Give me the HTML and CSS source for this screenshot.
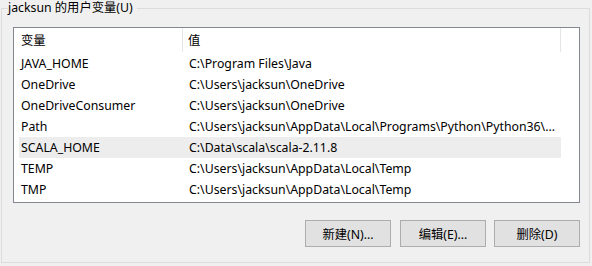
FILE: index.html
```html
<!DOCTYPE html>
<html lang="zh-CN">
<head>
<meta charset="utf-8">
<link rel="stylesheet" href="styles.css">
</head>
<body>
<fieldset class="group">
  <legend class="group-title">jacksun 的用户变量(U)</legend>
  <div class="list">
    <div class="list-head">
      <div class="hcell c1">变量</div>
      <div class="hcell c2">值</div>
    </div>
    <div class="rows">
      <div class="row"><span class="c1">JAVA_HOME</span><span class="c2">C:\Program Files\Java</span></div>
      <div class="row"><span class="c1">OneDrive</span><span class="c2">C:\Users\jacksun\OneDrive</span></div>
      <div class="row"><span class="c1">OneDriveConsumer</span><span class="c2">C:\Users\jacksun\OneDrive</span></div>
      <div class="row"><span class="c1">Path</span><span class="c2">C:\Users\jacksun\AppData\Local\Programs\Python\Python36\...</span></div>
      <div class="row selected"><span class="c1">SCALA_HOME</span><span class="c2">C:\Data\scala\scala-2.11.8</span></div>
      <div class="row"><span class="c1">TEMP</span><span class="c2">C:\Users\jacksun\AppData\Local\Temp</span></div>
      <div class="row"><span class="c1">TMP</span><span class="c2">C:\Users\jacksun\AppData\Local\Temp</span></div>
    </div>
  </div>
  <div class="actions">
    <button class="btn btn-new">新建(N)...</button>
    <button class="btn">编辑(E)...</button>
    <button class="btn">删除(D)</button>
  </div>
</fieldset>
</body>
</html>
```
FILE: styles.css
```css
html, body {
  margin: 0;
  padding: 0;
  background: #f0f0f0;
}
body {
  font-family: "Noto Sans", "Noto Sans CJK SC", sans-serif;
  font-size: 12.3px;
  color: #000;
}
.group {
  box-sizing: border-box;
  width: 589px;
  height: 263px;
  margin: 0 0 0 1px;
  padding: 0 9px 0 11px;
  border: 1px solid #dcdcdc;
}
.group-title {
  margin-left: -5px;
  padding: 0 4px 0 0;
  line-height: 16px;
  height: 16px;
}
.list {
  box-sizing: border-box;
  margin-top: 11px;
  height: 176px;
  background: #fff;
  border: 1px solid #828790;
}
.list-head {
  display: grid;
  grid-template-columns: 169px 378px 1fr;
  height: 25px;
  align-items: stretch;
}
.hcell {
  display: flex;
  align-items: center;
  border-right: 1px solid #e5e5e5;
  box-sizing: border-box;
  height: 24px;
}
.hcell.c1 { padding-left: 7px; }
.hcell.c2 { padding-left: 5px; }
.rows {
  display: flex;
  flex-direction: column;
}
.row {
  display: grid;
  grid-template-columns: 164px 1fr;
  margin-left: 5px;
  width: 542px;
  height: 21px;
  align-items: center;
  white-space: nowrap;
}
.row .c1 { padding-left: 2px; }
.row .c2 { padding-left: 6px; overflow: hidden; }
.row.selected { background: #ededed; }
.actions {
  display: flex;
  justify-content: flex-end;
  gap: 8px;
  margin-top: 17px;
}
.btn-new { margin-right: 1px; }
.btn {
  box-sizing: border-box;
  width: 86px;
  height: 27px;
  background: #e1e1e1;
  border: 1px solid #adadad;
  font: inherit;
  color: #000;
  padding: 0;
}
```
